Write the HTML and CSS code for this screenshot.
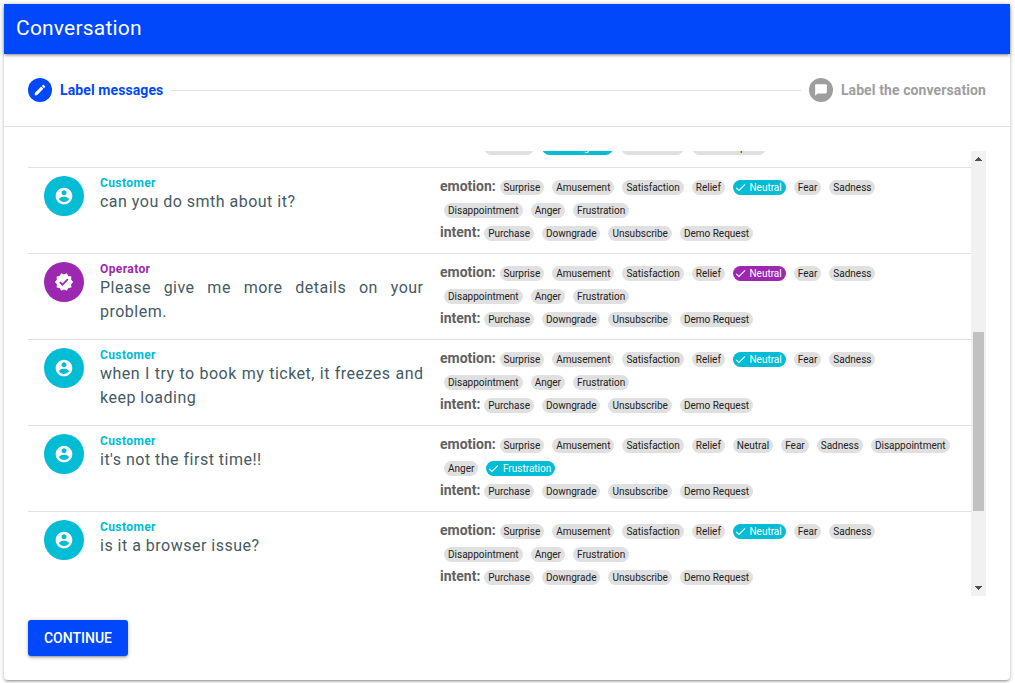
FILE: index.html
```
<!DOCTYPE html>
<html lang="en">
<head>
<meta charset="utf-8">
<title>Conversation</title>
<link rel="stylesheet" href="styles.css">
</head>
<body>
<svg class="defs" width="0" height="0">
  <symbol id="person" viewBox="0 0 24 24"><path d="M12 2C6.480 2 2 6.480 2 12s4.480 10 10 10 10-4.480 10-10S17.520 2 12 2zm0 3c1.660 0 3 1.340 3 3s-1.340 3-3 3-3-1.340-3-3 1.340-3 3-3zm0 14.200c-2.500 0-4.710-1.280-6-3.220.03-1.990 4-3.080 6-3.080 1.990 0 5.970 1.090 6 3.080-1.290 1.940-3.500 3.220-6 3.220z"/></symbol>
  <symbol id="verified" viewBox="0 0 24 24"><path d="M23 12l-2.440-2.790.34-3.690-3.610-.82-1.890-3.200L12 2.960 8.600 1.500 6.710 4.690 3.100 5.500l.34 3.700L1 12l2.440 2.790-.34 3.700 3.610.82L8.600 22.500l3.400-1.470 3.400 1.460 1.890-3.190 3.610-.82-.34-3.690L23 12zm-12.910 4.720l-3.800-3.810 1.480-1.480 2.320 2.330 5.850-5.870 1.480 1.480-7.330 7.350z"/></symbol>
  <symbol id="check" viewBox="0 0 24 24"><path d="M9 16.170L4.830 12l-1.420 1.410L9 19 21 7l-1.410-1.410z"/></symbol>
</svg>
<div class="card">
  <header class="toolbar">Conversation</header>
  <div class="stepper">
    <div class="step active">
      <span class="dot"><svg viewBox="0 0 24 24"><path d="M3 17.250V21h3.750L17.810 9.940l-3.750-3.750L3 17.250zM20.710 7.040c.39-.39.39-1.020 0-1.410l-2.340-2.340c-.39-.39-1.020-.39-1.410 0l-1.830 1.830 3.750 3.750 1.830-1.830z"/></svg></span>
      <span>Label messages</span>
    </div>
    <div class="step-line"></div>
    <div class="step">
      <span class="dot"><svg viewBox="0 0 24 24"><path d="M20 2H4c-1.100 0-2 .9-2 2v18l4-4h14c1.100 0 2-.9 2-2V4c0-1.100-.9-2-2-2z"/></svg></span>
      <span>Label the conversation</span>
    </div>
  </div>
  <div class="content">
    <div class="scroll-area">
      <div class="messages" id="messages"></div>
      <div class="scrollbar">
        <svg class="arrow" viewBox="0 0 15 15"><path d="M4 10h7v-1h-1v-1h-1v-1h-1v-1h-1v1h-1v1h-1v1h-1z"/></svg>
        <div class="thumb"></div>
        <svg class="arrow down" viewBox="0 0 15 15"><path d="M4 5h7v1h-1v1h-1v1h-1v1h-1v-1h-1v-1h-1v-1h-1z"/></svg>
      </div>
    </div>
    <button class="continue">CONTINUE</button>
  </div>
</div>
<script src="main.js"></script>
</body>
</html>
```
FILE: styles.css
```
* { box-sizing: border-box; }
body {
  margin: 0;
  padding: 4px 5px 3px 4px;
  height: 683px;
  overflow: hidden;
  background: #fff;
  font-family: Roboto, "Liberation Sans", sans-serif;
  font-size: 14px;
  color: #212121;
}
svg { display: block; fill: currentColor; }
.defs { position: absolute; }
.card {
  height: 676px;
  border-radius: 4px;
  background: #fff;
  box-shadow: 0 1px 5px rgba(0,0,0,.2), 0 2px 2px rgba(0,0,0,.14), 0 3px 1px -2px rgba(0,0,0,.12);
}
.toolbar {
  height: 50px;
  padding: 0 12px;
  line-height: 48px;
  background: #0048f9;
  color: #fff;
  font-size: 21px;
  letter-spacing: .21px;
  box-shadow: 0 1px 5px rgba(0,0,0,.2), 0 2px 2px rgba(0,0,0,.14), 0 3px 1px -2px rgba(0,0,0,.12);
}
.stepper {
  display: flex;
  align-items: center;
  gap: 8px;
  height: 73px;
  padding: 0 24px;
  border-bottom: 1px solid #e0e0e0;
}
.step {
  display: flex;
  align-items: center;
  gap: 8px;
  color: #9e9e9e;
  font-weight: 700;
  letter-spacing: .1px;
  white-space: nowrap;
}
.step.active { color: #0048f9; }
.dot {
  display: grid;
  place-items: center;
  width: 24px;
  height: 24px;
  border-radius: 50%;
  background: currentColor;
}
.dot svg { width: 14px; height: 14px; fill: #fff; }
.step-line { flex: 1; height: 1px; background: #e0e0e0; }
.content { padding: 24px; }
.scroll-area { display: flex; height: 445px; overflow: hidden; }
.messages { flex: 1; min-width: 0; }
.row {
  display: flex;
  height: 86px;
  padding: 8px 16px;
  border-top: 1px solid #e0e0e0;
}
.row:first-child { margin-top: -70px; }
.customer { --tone: #00bcd4; }
.operator { --tone: #9c27b0; }
.avatar {
  display: grid;
  place-items: center;
  flex: none;
  width: 40px;
  height: 40px;
  margin-right: 16px;
  border-radius: 50%;
  background: var(--tone);
  color: #fff;
}
.avatar svg { width: 20px; height: 20px; }
.message { flex: none; width: 323.500px; margin-right: 16.500px; }
.author {
  height: 14px;
  line-height: 14px;
  font-size: 12px;
  font-weight: 700;
  letter-spacing: .4px;
  color: var(--tone);
}
.text {
  font-size: 16px;
  line-height: 24px;
  letter-spacing: .49px;
  text-align: justify;
  color: #455a64;
}
.labels { flex: 1; min-width: 0; }
.group { display: flex; flex-wrap: wrap; }
.name {
  height: 23px;
  line-height: 21px;
  font-weight: 700;
  color: #616161;
}
.chip {
  display: flex;
  align-items: center;
  height: 15px;
  margin: 4px;
  padding: 0 4px;
  border-radius: 8px;
  background: #e0e0e0;
  font-size: 10px;
  line-height: 15px;
  white-space: nowrap;
}
.name + .chip { margin-left: 3.800px; }
.chip.selected { padding-left: 1px; background: var(--tone); color: #fff; }
.chip svg { width: 13px; height: 13px; margin-right: 2.600px; }
.scrollbar {
  display: flex;
  flex-direction: column;
  flex: none;
  width: 15px;
  background: #f1f1f1;
}
.arrow { width: 15px; height: 15px; fill: #505050; }
.thumb { height: 179px; margin: 166px 2px auto; background: #c1c1c1; }
.continue {
  display: block;
  width: 100px;
  height: 36px;
  margin-top: 24px;
  padding: 0;
  border: 0;
  border-radius: 3px;
  background: #0048f9;
  color: #fff;
  font: 500 14px Roboto, sans-serif;
  box-shadow: 0 1px 5px rgba(0,0,0,.2), 0 2px 2px rgba(0,0,0,.14), 0 3px 1px -2px rgba(0,0,0,.12);
}
```
FILE: main.js
```
const emotions = ['Surprise', 'Amusement', 'Satisfaction', 'Relief', 'Neutral', 'Fear', 'Sadness', 'Disappointment', 'Anger', 'Frustration'];
const intents = ['Purchase', 'Downgrade', 'Unsubscribe', 'Demo Request'];
const messages = [
  { who: 'Customer', text: '', emotion: 'Neutral', intent: 'Downgrade' },
  { who: 'Customer', text: 'can you do smth about it?', emotion: 'Neutral' },
  { who: 'Operator', text: 'Please give me more details on your problem.', emotion: 'Neutral' },
  { who: 'Customer', text: 'when I try to book my ticket, it freezes and keep loading', emotion: 'Neutral' },
  { who: 'Customer', text: "it's not the first time!!", emotion: 'Frustration' },
  { who: 'Customer', text: 'is it a browser issue?', emotion: 'Neutral' }
];

const icon = id => `<svg><use href="#${id}"/></svg>`;
const chip = (label, on) => `<span class="chip${on ? ' selected' : ''}">${on ? icon('check') : ''}${label}</span>`;
const group = (name, items, chosen) =>
  `<div class="group"><span class="name">${name}:</span>${items.map(i => chip(i, i === chosen)).join('')}</div>`;

document.getElementById('messages').innerHTML = messages.map(m => `
  <div class="row ${m.who.toLowerCase()}">
    <div class="avatar">${icon(m.who === 'Operator' ? 'verified' : 'person')}</div>
    <div class="message"><div class="author">${m.who}</div><div class="text">${m.text}</div></div>
    <div class="labels">${group('emotion', emotions, m.emotion)}${group('intent', intents, m.intent)}</div>
  </div>`).join('');
```
